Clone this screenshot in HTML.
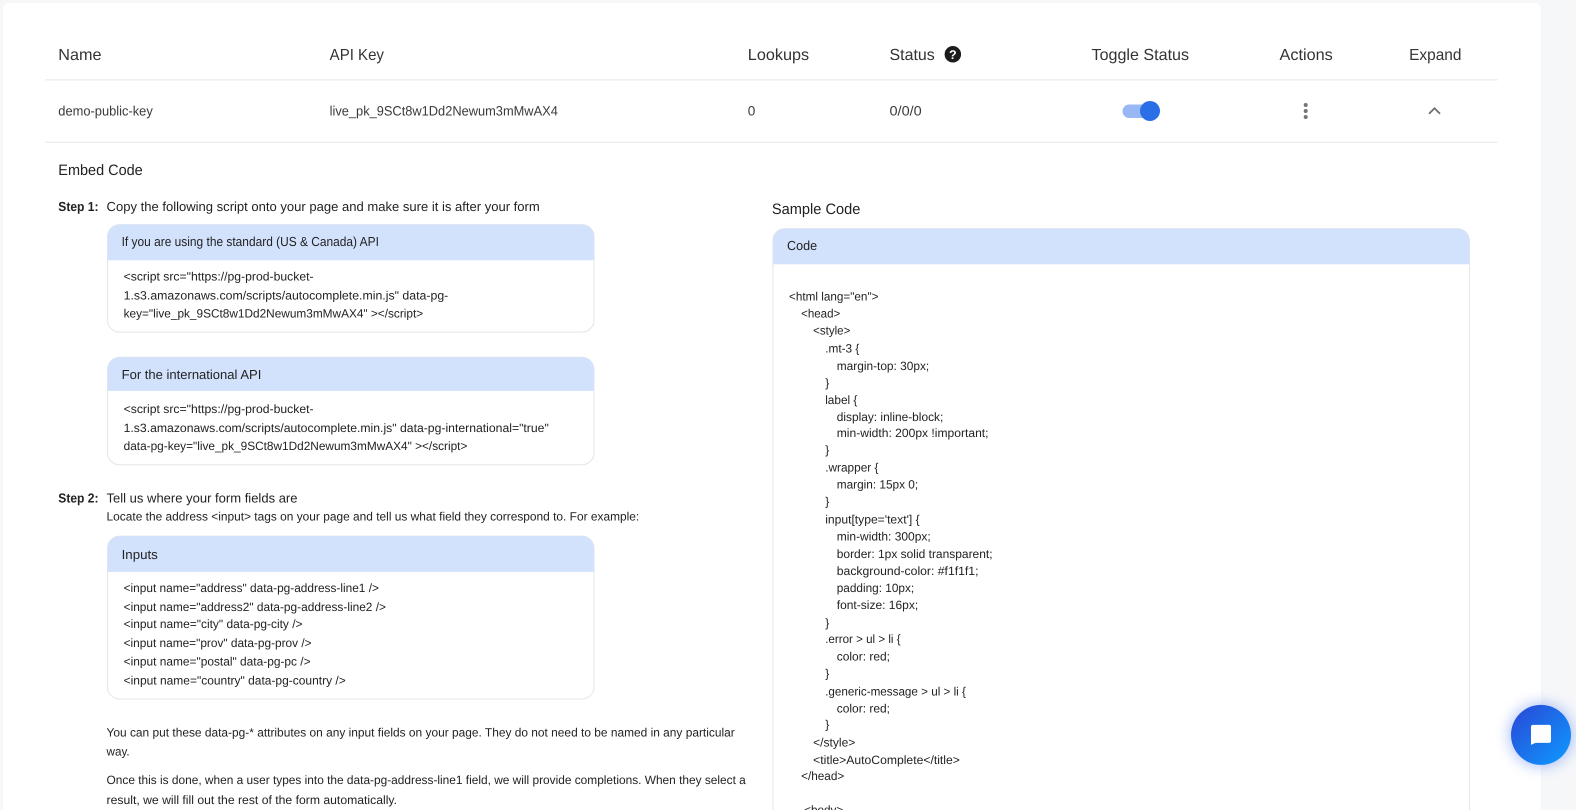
<!DOCTYPE html>
<html lang="en"><head><meta charset="utf-8"><title>API Keys</title>
<style>
html,body{margin:0;padding:0;width:1576px;height:810px;overflow:hidden;background:#f6f7f9}
svg{display:block;position:absolute;left:0;top:0;overflow:hidden}
text{font-family:"Liberation Sans",Arial,sans-serif;fill:#222;white-space:pre;text-rendering:geometricPrecision}
.h{font-size:16px;fill:#333}
.r{font-size:13.5px;fill:#3a3a3a}
.t{font-size:15px;fill:#222}
.s{font-size:13px;fill:#222}
.c{font-size:12px;fill:#222}
.b{font-size:13px;font-weight:bold;fill:#222}
.l{fill:none;stroke:#e6e8eb;stroke-width:1}
</style></head><body>
<svg width="1576" height="810" viewBox="0 0 1568 806" preserveAspectRatio="none" xmlns="http://www.w3.org/2000/svg">
<defs>
<linearGradient id="g" x1="0" y1="0" x2="1" y2="1"><stop offset="0" stop-color="#2a46d6"/><stop offset="1" stop-color="#0d9bff"/></linearGradient>
<filter id="f" x="-50%" y="-50%" width="200%" height="200%"><feGaussianBlur stdDeviation="7"/></filter>
</defs>
<path d="M3 806V9a6 6 0 0 1 6-6H1527a6 6 0 0 1 6 6V806Z" fill="#fff"/>

<text class="h" x="58" y="59.500" textLength="43" lengthAdjust="spacingAndGlyphs">Name</text>
<text class="h" x="328" y="59.500" textLength="54" lengthAdjust="spacingAndGlyphs">API Key</text>
<text class="h" x="744" y="59.500" textLength="61" lengthAdjust="spacingAndGlyphs">Lookups</text>
<text class="h" x="885" y="59.500" textLength="45" lengthAdjust="spacingAndGlyphs">Status</text>
<text class="h" x="1086" y="59.500" textLength="97" lengthAdjust="spacingAndGlyphs">Toggle Status</text>
<text class="h" x="1273" y="59.500" textLength="53" lengthAdjust="spacingAndGlyphs">Actions</text>
<text class="h" x="1402" y="59.500" textLength="52" lengthAdjust="spacingAndGlyphs">Expand</text>
<circle cx="948" cy="54" r="8.200" fill="#1c1c1c"/>
<text x="948" y="58.500" text-anchor="middle" style="font-size:12.500px;font-weight:bold;fill:#fff">?</text>
<line class="l" x1="45" y1="79.500" x2="1490" y2="79.500"/>

<text class="r" x="58" y="115" textLength="94" lengthAdjust="spacingAndGlyphs">demo-public-key</text>
<text class="r" x="328" y="115" textLength="227" lengthAdjust="spacingAndGlyphs">live_pk_9SCt8w1Dd2Newum3mMwAX4</text>
<text class="r" x="744" y="115" textLength="7.500" lengthAdjust="spacingAndGlyphs">0</text>
<text class="r" x="885" y="115" textLength="32" lengthAdjust="spacingAndGlyphs">0/0/0</text>
<line class="l" x1="45" y1="141.500" x2="1490" y2="141.500"/>

<g transform="scale(.99492)">
<rect x="1122.500" y="104.500" width="28" height="13.500" rx="6.750" fill="#97b8f5"/>
<circle cx="1150" cy="111" r="10" fill="#2a6fe6"/>
<circle cx="1305.700" cy="105" r="2" fill="#757575"/><circle cx="1305.700" cy="111" r="2" fill="#757575"/><circle cx="1305.700" cy="117" r="2" fill="#757575"/>
<path d="M1429 113.800l5.500-5.500 5.500 5.500" fill="none" stroke="#6e6e6e" stroke-width="1.800"/>
</g>

<text class="t" x="58" y="174" textLength="84" lengthAdjust="spacingAndGlyphs">Embed Code</text>
<text class="b" x="58" y="210" textLength="40" lengthAdjust="spacingAndGlyphs">Step 1:</text>
<text class="s" x="106" y="210" textLength="431" lengthAdjust="spacingAndGlyphs">Copy the following script onto your page and make sure it is after your form</text>

<rect x="107" y="223.500" width="484" height="107" rx="12" fill="#fff" stroke="#e3e5e8"/>
<path d="M107 259V235.500a12 12 0 0 1 12-12H579a12 12 0 0 1 12 12V259Z" fill="#d3e2fc"/>
<text class="s" x="121" y="245" textLength="256" lengthAdjust="spacingAndGlyphs">If you are using the standard (US &amp; Canada) API</text>
<text class="c" x="123" y="279" textLength="189" lengthAdjust="spacingAndGlyphs">&lt;script src="https://pg-prod-bucket-</text>
<text class="c" x="123" y="298" textLength="323" lengthAdjust="spacingAndGlyphs">1.s3.amazonaws.com/scripts/autocomplete.min.js" data-pg-</text>
<text class="c" x="123" y="316" textLength="298" lengthAdjust="spacingAndGlyphs">key="live_pk_9SCt8w1Dd2Newum3mMwAX4" &gt;&lt;/script&gt;</text>

<rect x="107" y="355.500" width="484" height="107" rx="12" fill="#fff" stroke="#e3e5e8"/>
<path d="M107 389V367.500a12 12 0 0 1 12-12H579a12 12 0 0 1 12 12V389Z" fill="#d3e2fc"/>
<text class="s" x="121" y="377" textLength="139" lengthAdjust="spacingAndGlyphs">For the international API</text>
<text class="c" x="123" y="411" textLength="189" lengthAdjust="spacingAndGlyphs">&lt;script src="https://pg-prod-bucket-</text>
<text class="c" x="123" y="430" textLength="423" lengthAdjust="spacingAndGlyphs">1.s3.amazonaws.com/scripts/autocomplete.min.js" data-pg-international="true"</text>
<text class="c" x="123" y="448" textLength="342" lengthAdjust="spacingAndGlyphs">data-pg-key="live_pk_9SCt8w1Dd2Newum3mMwAX4" &gt;&lt;/script&gt;</text>

<text class="b" x="58" y="500" textLength="40" lengthAdjust="spacingAndGlyphs">Step 2:</text>
<text class="s" x="106" y="500" textLength="190" lengthAdjust="spacingAndGlyphs">Tell us where your form fields are</text>
<text class="c" x="106" y="518" textLength="530" lengthAdjust="spacingAndGlyphs">Locate the address &lt;input&gt; tags on your page and tell us what field they correspond to. For example:</text>

<rect x="107" y="533.500" width="484" height="162" rx="12" fill="#fff" stroke="#e3e5e8"/>
<path d="M107 569V545.500a12 12 0 0 1 12-12H579a12 12 0 0 1 12 12V569Z" fill="#d3e2fc"/>
<text class="s" x="121" y="556" textLength="36" lengthAdjust="spacingAndGlyphs">Inputs</text>
<text class="c" x="123" y="589" textLength="254" lengthAdjust="spacingAndGlyphs">&lt;input name="address" data-pg-address-line1 /&gt;</text>
<text class="c" x="123" y="608" textLength="261" lengthAdjust="spacingAndGlyphs">&lt;input name="address2" data-pg-address-line2 /&gt;</text>
<text class="c" x="123" y="625" textLength="178" lengthAdjust="spacingAndGlyphs">&lt;input name="city" data-pg-city /&gt;</text>
<text class="c" x="123" y="644" textLength="187" lengthAdjust="spacingAndGlyphs">&lt;input name="prov" data-pg-prov /&gt;</text>
<text class="c" x="123" y="662" textLength="186" lengthAdjust="spacingAndGlyphs">&lt;input name="postal" data-pg-pc /&gt;</text>
<text class="c" x="123" y="681" textLength="221" lengthAdjust="spacingAndGlyphs">&lt;input name="country" data-pg-country /&gt;</text>

<text class="c" x="106" y="733" textLength="625" lengthAdjust="spacingAndGlyphs">You can put these data-pg-* attributes on any input fields on your page. They do not need to be named in any particular</text>
<text class="c" x="106" y="752" textLength="23" lengthAdjust="spacingAndGlyphs">way.</text>
<text class="c" x="106" y="780" textLength="636" lengthAdjust="spacingAndGlyphs">Once this is done, when a user types into the data-pg-address-line1 field, we will provide completions. When they select a</text>
<text class="c" x="106" y="800" textLength="289" lengthAdjust="spacingAndGlyphs">result, we will fill out the rest of the form automatically.</text>

<text class="t" x="768" y="213" textLength="88" lengthAdjust="spacingAndGlyphs">Sample Code</text>
<path d="M769 806V239.500a12 12 0 0 1 12-12H1450a12 12 0 0 1 12 12V806" fill="#fff" stroke="#e3e5e8"/>
<path d="M769 263V239.500a12 12 0 0 1 12-12H1450a12 12 0 0 1 12 12V263Z" fill="#d3e2fc"/>
<text class="s" x="783" y="249" textLength="30" lengthAdjust="spacingAndGlyphs">Code</text>

<text class="c" x="785" y="299" textLength="89" lengthAdjust="spacingAndGlyphs">&lt;html lang="en"&gt;</text>
<text class="c" x="797" y="316" textLength="39" lengthAdjust="spacingAndGlyphs">&lt;head&gt;</text>
<text class="c" x="809" y="333" textLength="37" lengthAdjust="spacingAndGlyphs">&lt;style&gt;</text>
<text class="c" x="821" y="351" textLength="34" lengthAdjust="spacingAndGlyphs">.mt-3 {</text>
<text class="c" x="832.500" y="368" textLength="92" lengthAdjust="spacingAndGlyphs">margin-top: 30px;</text>
<text class="c" x="821" y="385">}</text>
<text class="c" x="821" y="402" textLength="32" lengthAdjust="spacingAndGlyphs">label {</text>
<text class="c" x="832.500" y="419" textLength="106" lengthAdjust="spacingAndGlyphs">display: inline-block;</text>
<text class="c" x="832.500" y="435" textLength="151" lengthAdjust="spacingAndGlyphs">min-width: 200px !important;</text>
<text class="c" x="821" y="452">}</text>
<text class="c" x="821" y="469" textLength="53" lengthAdjust="spacingAndGlyphs">.wrapper {</text>
<text class="c" x="832.500" y="486" textLength="81" lengthAdjust="spacingAndGlyphs">margin: 15px 0;</text>
<text class="c" x="821" y="503">}</text>
<text class="c" x="821" y="521" textLength="94" lengthAdjust="spacingAndGlyphs">input[type='text'] {</text>
<text class="c" x="832.500" y="538" textLength="93.500" lengthAdjust="spacingAndGlyphs">min-width: 300px;</text>
<text class="c" x="832.500" y="555" textLength="155" lengthAdjust="spacingAndGlyphs">border: 1px solid transparent;</text>
<text class="c" x="832.500" y="572" textLength="141" lengthAdjust="spacingAndGlyphs">background-color: #f1f1f1;</text>
<text class="c" x="832.500" y="589" textLength="77" lengthAdjust="spacingAndGlyphs">padding: 10px;</text>
<text class="c" x="832.500" y="606" textLength="81" lengthAdjust="spacingAndGlyphs">font-size: 16px;</text>
<text class="c" x="821" y="624">}</text>
<text class="c" x="821" y="640" textLength="75" lengthAdjust="spacingAndGlyphs">.error &gt; ul &gt; li {</text>
<text class="c" x="832.500" y="657" textLength="53" lengthAdjust="spacingAndGlyphs">color: red;</text>
<text class="c" x="821" y="674">}</text>
<text class="c" x="821" y="692" textLength="140" lengthAdjust="spacingAndGlyphs">.generic-message &gt; ul &gt; li {</text>
<text class="c" x="832.500" y="709" textLength="53" lengthAdjust="spacingAndGlyphs">color: red;</text>
<text class="c" x="821" y="725">}</text>
<text class="c" x="809" y="743" textLength="42" lengthAdjust="spacingAndGlyphs">&lt;/style&gt;</text>
<text class="c" x="809" y="760" textLength="146" lengthAdjust="spacingAndGlyphs">&lt;title&gt;AutoComplete&lt;/title&gt;</text>
<text class="c" x="797" y="776" textLength="43" lengthAdjust="spacingAndGlyphs">&lt;/head&gt;</text>
<text class="c" x="800" y="810" textLength="39" lengthAdjust="spacingAndGlyphs">&lt;body&gt;</text>

<g transform="scale(.99492)">
<circle cx="1541" cy="735" r="32" fill="#3a6cf0" opacity=".4" filter="url(#f)"/>
<circle cx="1541" cy="735" r="30" fill="url(#g)"/>
<path d="M1533 725H1549a2 2 0 0 1 2 2V741a2 2 0 0 1-2 2H1535.500L1531 745V727a2 2 0 0 1 2-2Z" fill="#fff"/>
</g>
</svg>
</body></html>
